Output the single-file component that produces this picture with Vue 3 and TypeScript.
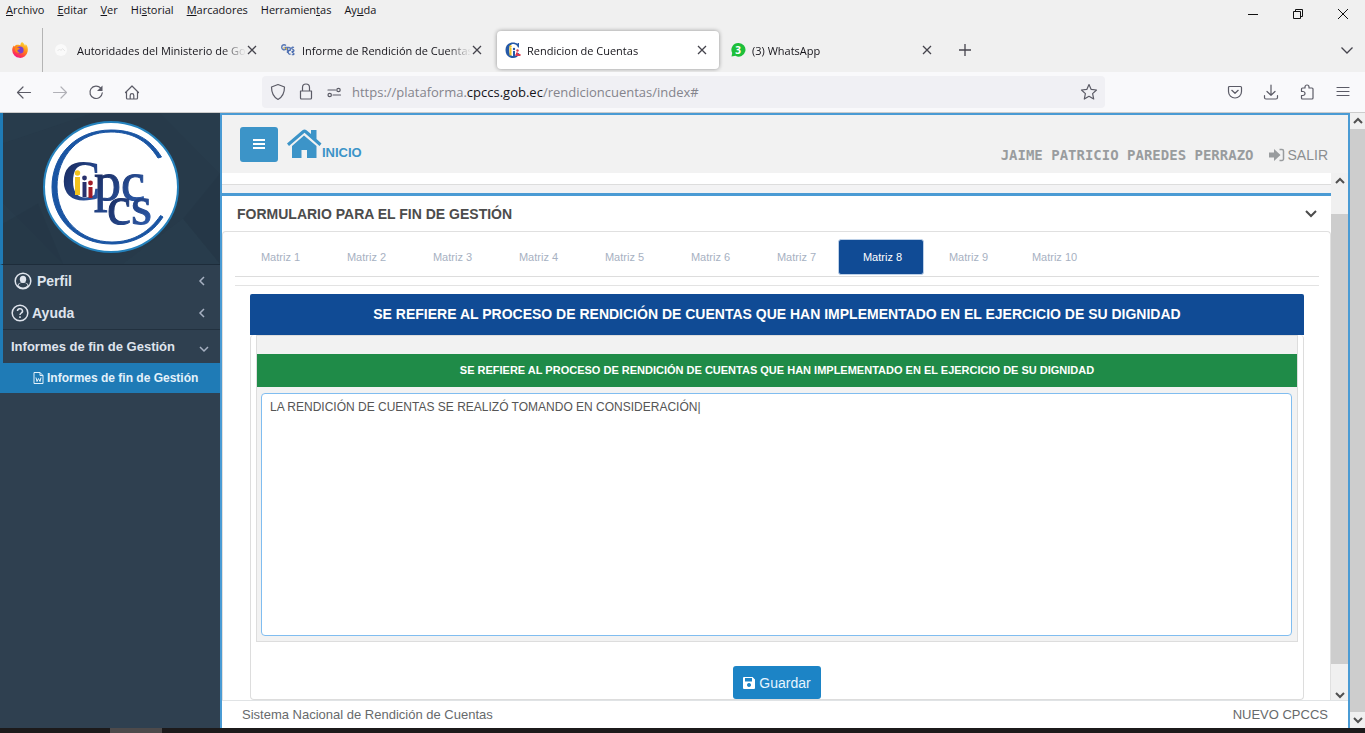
<script setup lang="ts">
import { ref } from 'vue'

interface MenuEntry { before: string; key: string; after: string }

const menus: MenuEntry[] = [
  { before: '', key: 'A', after: 'rchivo' },
  { before: '', key: 'E', after: 'ditar' },
  { before: '', key: 'V', after: 'er' },
  { before: 'Hi', key: 's', after: 'torial' },
  { before: '', key: 'M', after: 'arcadores' },
  { before: 'Herramien', key: 't', after: 'as' },
  { before: 'Ay', key: 'u', after: 'da' },
]

const browserTabs = [
  { id: 'gob', title: 'Autoridades del Ministerio de Gobierno' },
  { id: 'informe', title: 'Informe de Rendición de Cuentas' },
  { id: 'cpccs', title: 'Rendicion de Cuentas' },
  { id: 'wa', title: '(3) WhatsApp' },
]

const matrices = Array.from({ length: 10 }, (_, i) => i + 1)
const current = ref(8)
const answer = ref('LA RENDICIÓN DE CUENTAS SE REALIZÓ TOMANDO EN CONSIDERACIÓN|')
</script>

<template>
  <div class="window">
    <div class="menubar">
      <nav class="menus" aria-label="Menú">
        <button v-for="m in menus" :key="m.key" type="button">{{ m.before }}<u>{{ m.key }}</u>{{ m.after }}</button>
      </nav>
      <div class="controls">
        <button type="button" aria-label="Minimizar"><svg width="12" height="12"><path d="M1 6.5h10" /></svg></button>
        <button type="button" aria-label="Restaurar"><svg width="12" height="12"><path d="M1.500 3.500h7v7h-7zM3.500 3.500v-2h7v7h-2" /></svg></button>
        <button type="button" aria-label="Cerrar"><svg width="12" height="12"><path d="M1 1l10 10M11 1L1 11" /></svg></button>
      </div>
    </div>

    <div class="tabstrip">
      <div class="pinned">
        <svg width="18" height="18" viewBox="0 0 18 18" aria-hidden="true">
          <defs>
            <linearGradient id="fox" x1="0.8" y1="0" x2="0.3" y2="1">
              <stop offset="0" stop-color="#ffe13a" /><stop offset="0.45" stop-color="#ff8a16" />
              <stop offset="0.8" stop-color="#ff3750" /><stop offset="1" stop-color="#f0128f" />
            </linearGradient>
          </defs>
          <path d="M11 1c2 1.300 2.600 2.600 2.900 3.700.7-.2.800-1 .700-1.700 2 2 2.600 4.500 2.100 7.300A7.800 7.800 0 0 1 1.200 9.300c0-2.300.7-3.800 1.700-4.900.1.600.3 1 .6 1.200C4.200 4.400 5.300 3.700 7 3.800c1-.1 1.900.1 2.500.5C9.300 3 9.900 1.900 11 1z" fill="url(#fox)" />
          <circle cx="9" cy="9" r="3.600" fill="#7b3fd0" />
          <path d="M4 7c2-1 3.500-.2 5 .4-.6 1-2 .9-2.500 1.500-.5 1.500 1 2.600 2.600 2.200-1.800 2-5.600.2-5.100-4.100z" fill="#ff8a16" />
        </svg>
      </div>
      <div class="tabs">
        <div v-for="t in browserTabs" :key="t.id" class="tab" :class="{ selected: t.id === 'cpccs' }">
          <svg v-if="t.id === 'gob'" class="favicon" viewBox="0 0 16 16" aria-hidden="true">
            <circle cx="6" cy="8" r="6" fill="#fafafa" /><path d="M2.500 9l2-2 1.500 1.500 1.500-2L10 9" fill="none" stroke="#e6e6e6" />
          </svg>
          <svg v-else-if="t.id === 'informe'" class="favicon" viewBox="0 0 16 16" aria-hidden="true">
            <path d="M6 3.500C4 2 1.500 3 1.700 5.500S4.500 8.500 6 7V5.500H4.500M7.500 11V5.500h1.500a1.500 1.500 0 0 1 0 3H7.500" fill="none" stroke="#5877b5" stroke-width="1.400" />
            <path d="M10.500 8.500C9 8 8 9 8.200 10.500s1.300 2 2.300 1.200M14 5.500c-1.500-.7-2.500 0-2.300.9s2.500 1 2.300 2.200-1.500 1.400-2.500.8M14 9.500c-1.500-.7-2 0-1.800.8s2 .6 1.800 1.600-1.300 1-2.200.5" fill="none" stroke="#4a6db0" stroke-width="1.200" />
            <path d="M4 5v2M6.500 6v2" stroke="#d7b445" />
          </svg>
          <svg v-else-if="t.id === 'cpccs'" class="favicon" viewBox="0 0 16 16" aria-hidden="true">
            <path d="M14 1v4.500h-1C12 2.700 10 2 8.500 2 5.500 2 4.200 4.500 4.200 8s1.300 6 4.300 6c2 0 3.800-1 4.800-3l1 .5c-1 3-3.300 4.500-6.300 4.500-4.500 0-7.500-3.300-7.500-8S3.500.5 8 .5c2 0 3.500.6 4.500 1.300L13 1z" fill="#2559a8" />
            <path d="M5.500 6.500v7M4.500 7h2" stroke="#f0c52a" stroke-width="2" /><circle cx="5.500" cy="4.500" r="1.200" fill="#f0c52a" />
            <path d="M9 9v5" stroke="#2559a8" stroke-width="2" /><circle cx="9" cy="7" r="1.200" fill="#2559a8" />
            <path d="M12 10.500v3M10.500 13h5" stroke="#d93a52" stroke-width="2" /><circle cx="12.500" cy="8.500" r="1.200" fill="#d93a52" />
          </svg>
          <svg v-else class="favicon" viewBox="0 0 16 16" aria-hidden="true">
            <path d="M8.500 1a6.800 6.800 0 1 1-3 12.800L1.500 14.500l.7-3.500a6.800 6.800 0 0 1 6.300-10z" fill="#1dbf3a" />
            <text x="8" y="11.500" text-anchor="middle" class="badge-num">3</text>
          </svg>
          <span class="tab-title">{{ t.title }}</span>
          <button type="button" class="tab-close" aria-label="Cerrar pestaña"><svg width="12" height="12"><path d="M2 2l8 8M10 2l-8 8" /></svg></button>
        </div>
      </div>
      <button type="button" class="new-tab" aria-label="Nueva pestaña"><svg width="14" height="14"><path d="M7 1v12M1 7h12" /></svg></button>
      <button type="button" class="all-tabs" aria-label="Listar pestañas"><svg width="14" height="14"><path d="M1.500 4.500L7 10l5.500-5.500" /></svg></button>
    </div>

    <div class="toolbar">
      <button type="button" aria-label="Atrás"><svg width="16" height="16"><path d="M14.500 8.500H1.500M7 3L1.500 8.500 7 14" /></svg></button>
      <button type="button" class="dim" aria-label="Adelante"><svg width="16" height="16"><path d="M1.500 8.500h13M9 3l5.500 5.500L9 14" /></svg></button>
      <button type="button" aria-label="Recargar"><svg width="16" height="16"><path d="M12.800 4.200A6.200 6.200 0 1 0 14.300 8.800" /><path class="solid" d="M14.500 1.500v5.500H9z" /></svg></button>
      <button type="button" aria-label="Inicio"><svg width="16" height="16"><path d="M1.500 8.500L8 2l6.500 6.500M2.500 7.800V14a1 1 0 0 0 1 1h9a1 1 0 0 0 1-1V7.800M6.200 15v-3.500a1.800 1.800 0 0 1 3.600 0V15" /></svg></button>
      <div class="urlbar">
        <svg width="16" height="18"><path d="M8 1.500l6.500 2.500C14.500 10 12.500 14 8 16.500 3.500 14 1.500 10 1.500 4z" /></svg>
        <svg width="16" height="18"><path d="M2.500 8h11v7a1 1 0 0 1-1 1h-9a1 1 0 0 1-1-1zM4.500 8V4.500a3.500 3.500 0 0 1 7 0V8" /></svg>
        <svg width="16" height="18"><path d="M2 7h7.500M14.500 12H7" /><circle cx="12.500" cy="7" r="1.700" /><circle cx="3.700" cy="12" r="1.700" /></svg>
        <span class="address">https://plataforma.<b>cpccs.gob.ec</b>/rendicioncuentas/index#</span>
        <button type="button" aria-label="Añadir marcador"><svg width="18" height="18"><path d="M9 1.500l2.200 4.900 5.300.6-3.900 3.600 1.100 5.400L9 13.300 4.300 16l1.100-5.400L1.500 7l5.300-.6z" /></svg></button>
      </div>
      <button type="button" aria-label="Pocket"><svg width="16" height="16"><path d="M2.500 2.500h11a1 1 0 0 1 1 1v4a6.500 6.500 0 0 1-13 0v-4a1 1 0 0 1 1-1zM4.800 6.300L8 9.300l3.200-3" /></svg></button>
      <button type="button" aria-label="Descargas"><svg width="16" height="16"><path d="M8 1v10M4 7.500L8 11.300l4-3.800M1.500 11.500v2a1.500 1.500 0 0 0 1.500 1.500h10a1.500 1.500 0 0 0 1.500-1.500v-2" /></svg></button>
      <button type="button" aria-label="Extensiones"><svg width="16" height="16"><path d="M2.500 7.500V5a1 1 0 0 1 1-1H6V3a2 2 0 0 1 4 0v1h3a1 1 0 0 1 1 1v9a1 1 0 0 1-1 1H3.500a1 1 0 0 1-1-1v-2.500H4a2 2 0 0 0 0-4z" /></svg></button>
      <button type="button" aria-label="Menú de la aplicación"><svg width="16" height="16"><path d="M2 3.500h12M2 7.500h12M2 11.500h12" /></svg></button>
    </div>

    <div class="viewport">
      <aside class="sidebar">
        <div class="brand">
          <svg class="facets" viewBox="0 0 217 150" preserveAspectRatio="none" aria-hidden="true">
            <path d="M0 30L90 0H0zM217 0v60l-60-60zM0 150V90l60 60zM120 150l60-45 37 45z" fill="#2b4050" opacity=".4" />
            <path d="M217 60v90l-37-45zM60 150l-25-60L0 110v40z" fill="#223443" opacity=".4" />
          </svg>
          <svg class="logo" width="138" height="132" viewBox="0 0 138 132" role="img" aria-label="CPCCS">
            <defs>
              <linearGradient id="ink" x1="0" x2="1" y1="0" y2="1"><stop offset="0" stop-color="#16204f" /><stop offset="1" stop-color="#2f62b5" /></linearGradient>
            </defs>
            <ellipse cx="68" cy="66" rx="67" ry="65" fill="#fff" stroke="#2582bd" stroke-width="2" />
            <path d="M118.500 36C107 17 90 9 68 9 32 9 9 35 9 66s24 57 60 57c22 0 40-10 51-27l-2.500-1.500C107 110 91 121 69 121 37 121 14 97 14 66S36 11 68 11c20 0 36 8 47 26z" fill="#1a55a3" stroke="#1a55a3" stroke-width="1" />
            <text x="18" y="79" class="logo-c">C</text>
            <text x="51" y="79" class="logo-s">pc</text>
            <text x="64" y="103" class="logo-s">cs</text>
            <path d="M34.500 56v18" stroke="#f2c21d" stroke-width="5" /><circle cx="34.500" cy="52" r="2.700" fill="#f2c21d" />
            <path d="M41.500 61v15" stroke="#27306d" stroke-width="4" /><circle cx="41.500" cy="57" r="2.400" fill="#27306d" />
            <path d="M47.500 66v11" stroke="#a01c27" stroke-width="4" /><circle cx="47.500" cy="62" r="2.400" fill="#a01c27" />
          </svg>
        </div>
        <ul class="nav">
          <li><a href="#">
            <svg class="round" width="18" height="18" viewBox="0 0 18 18"><circle cx="9" cy="9" r="7.800" /><ellipse class="solid" cx="9" cy="7.300" rx="3.200" ry="3.600" /><path class="solid" d="M3 14c.5-2 2.500-3.200 4-3.500h4c1.500.3 3.500 1.500 4 3.500-3 3.500-9 3.500-12 0z" /><path class="cut" d="M4.500 13.500c0-1.500 1.500-2.300 2.500-2.500h4c1 .2 2.500 1 2.500 2.500-2.500 2.500-6.500 2.500-9 0z" /></svg>
            <span>Perfil</span><svg class="arrow" width="12" height="12"><path d="M8 2L4 6l4 4" /></svg></a></li>
          <li><a href="#" class="tight">
            <svg class="round" width="18" height="18" viewBox="0 0 18 18"><circle cx="9" cy="9" r="7.800" /><path d="M6.500 7a2.500 2.300 0 1 1 3.700 2c-.9.600-1.200.900-1.200 2M9 12.300v1.700" /></svg>
            <span>Ayuda</span><svg class="arrow" width="12" height="12"><path d="M8 2L4 6l4 4" /></svg></a></li>
          <li class="open"><a href="#" class="tight"><span>Informes de fin de Gestión</span><svg class="arrow" width="12" height="12"><path d="M2 6l4 4 4-4" /></svg></a></li>
        </ul>
        <a href="#" class="subitem">
          <svg width="11" height="12" viewBox="0 0 11 12"><path d="M1 .5h6l3 3v8H1zM7 .5v3h3M3 5.500l1 4 1.500-3 1.500 3 1-4" /></svg>
          <span>Informes de fin de Gestión</span>
        </a>
      </aside>

      <main class="page">
        <header class="topbar">
          <button type="button" class="toggle" aria-label="Alternar menú"><svg width="12" height="12"><path d="M0 2h12M0 6h12M0 10h12" /></svg></button>
          <a href="#" class="home">
            <svg width="36" height="30" viewBox="0 0 36 30"><path d="M17 6.500L29.500 17v12H20v-8h-5.500v8H5V17z" /><path d="M24 1h5.500v9l5 4.500-2 2.500L17.500 3.800 2 17 0 14.500 15.500 1.300q2-1.600 4 0L24 5z" /></svg>
            <span>INICIO</span>
          </a>
          <span class="user">JAIME PATRICIO PAREDES PERRAZO</span>
          <a href="#" class="logout">
            <svg width="16" height="14" viewBox="0 0 16 14"><path d="M0 4.500h5V1l6.500 6L5 13V9.500H0z" fill="#999c9e" /><path d="M10.500 1.500h2.500a1.500 1.500 0 0 1 1.500 1.500v8a1.500 1.500 0 0 1-1.500 1.500h-2.500" fill="none" stroke="#999c9e" stroke-width="1.500" /></svg>
            <span>SALIR</span>
          </a>
        </header>

        <div class="body">
          <div class="content">
            <div class="strip"></div>
            <div class="gap"></div>
            <section class="card">
              <div class="card-title">
                <h5>FORMULARIO PARA EL FIN DE GESTIÓN</h5>
                <button type="button" aria-label="Contraer"><svg width="12" height="10"><path d="M1 2l5 5 5-5" /></svg></button>
              </div>
              <div class="card-body">
                <div class="matrix-tabs" role="tablist">
                  <button v-for="n in matrices" :key="n" type="button" role="tab" :aria-selected="n === current" :class="{ on: n === current }" @click="current = n">Matriz {{ n }}</button>
                </div>
                <div class="panel">
                  <h4>SE REFIERE AL PROCESO DE RENDICIÓN DE CUENTAS QUE HAN IMPLEMENTADO EN EL EJERCICIO DE SU DIGNIDAD</h4>
                  <form class="form" @submit.prevent>
                    <div class="field">
                      <label for="answer">SE REFIERE AL PROCESO DE RENDICIÓN DE CUENTAS QUE HAN IMPLEMENTADO EN EL EJERCICIO DE SU DIGNIDAD</label>
                      <textarea id="answer" v-model="answer" spellcheck="false"></textarea>
                    </div>
                    <button type="submit" class="save">
                      <svg width="12" height="12" viewBox="0 0 12 12"><path fill-rule="evenodd" d="M1 0h8.500L12 2.500V11a1 1 0 0 1-1 1H1a1 1 0 0 1-1-1V1a1 1 0 0 1 1-1zM2 1v3.500h7V1zM6 6a2 2 0 1 0 .01 0z" /></svg>
                      Guardar
                    </button>
                  </form>
                </div>
              </div>
            </section>
          </div>
          <div class="scroll inner" aria-hidden="true">
            <svg class="end" width="10" height="8"><path d="M1 6l4-4 4 4" /></svg>
            <div class="lead"></div><div class="thumb"></div><div class="trail"></div>
            <svg class="end last" width="10" height="8"><path d="M1 2l4 4 4-4" /></svg>
          </div>
        </div>

        <footer class="footer"><span>Sistema Nacional de Rendición de Cuentas</span><span>NUEVO CPCCS</span></footer>
      </main>

      <div class="scroll outer" aria-hidden="true">
        <svg class="end" width="10" height="8"><path d="M1 6l4-4 4 4" /></svg>
        <div class="thumb"></div>
        <svg class="end" width="10" height="8"><path d="M1 2l4 4 4-4" /></svg>
      </div>
    </div>
    <div class="taskbar"><i></i></div>
  </div>
</template>

<style>
body { margin: 0; background: #fff; }
</style>

<style scoped>
* { box-sizing: border-box; }
button { font: inherit; color: inherit; background: none; border: 0; padding: 0; margin: 0; display: inline-flex; align-items: center; justify-content: center; }
a { color: inherit; text-decoration: none; }
svg { flex: none; display: block; }
h4, h5, ul { margin: 0; padding: 0; list-style: none; }

.window { display: flex; flex-direction: column; height: 100vh; overflow: hidden; font-family: "Liberation Sans", Arial, sans-serif; }

/* Browser chrome */
.menubar, .tabstrip, .toolbar { font-family: "Open Sans", "Noto Sans", sans-serif; font-size: 11px; color: #15141a; flex: none; display: flex; }
.menubar { height: 28px; background: #f0f0f0; justify-content: space-between; }
.menus { display: flex; gap: 13px; padding-left: 6px; height: 20px; }
.menus button { display: block; line-height: 20px; }
.controls { display: flex; }
.controls button { width: 45px; }
.controls path { fill: none; stroke: #111; }
.tabstrip { height: 44px; background: #f0f0f0; align-items: center; }
.pinned { width: 43px; height: 44px; border-right: 1px solid #b4b4b4; display: flex; align-items: center; justify-content: center; padding-right: 3px; }
.tabs { display: flex; gap: 3px; padding-left: 4px; }
.tab { width: 222px; height: 38px; border-radius: 4px; padding: 0 11px 0 8px; display: flex; align-items: center; }
.tab.selected { background: #fff; box-shadow: 0 0 4px rgba(0, 0, 0, .4); }
.favicon { width: 16px; height: 16px; margin-right: 6px; }
.badge-num { font-size: 10px; font-weight: 700; fill: #fff; }
.tab-title { flex: 1; min-width: 0; overflow: hidden; white-space: nowrap; -webkit-mask-image: linear-gradient(to left, transparent, #000 24px); mask-image: linear-gradient(to left, transparent, #000 24px); }
.tab-close path, .new-tab path, .all-tabs path { fill: none; stroke: #45444d; stroke-width: 1.3; }
.new-tab { margin-left: 14px; }
.all-tabs { margin: 0 11px 0 auto; }
.toolbar { height: 41px; background: #f9f9fb; border-bottom: 1px solid #ccc; padding: 0 4px 0 6px; align-items: center; }
.toolbar > button { width: 36px; height: 32px; }
.toolbar path, .toolbar circle { fill: none; stroke: #5b5b66; stroke-width: 1.2; stroke-linejoin: round; stroke-linecap: round; }
.toolbar path.solid { fill: #5b5b66; stroke: none; }
.toolbar .dim { opacity: .45; }
.urlbar { flex: 1; margin: 0 112px; height: 32px; background: #f0f0f4; border-radius: 4px; display: flex; align-items: center; gap: 12px; padding: 0 7px 0 8px; }
.address { flex: 1; font-size: 13px; color: #84848c; margin-left: -2px; white-space: nowrap; }
.address b { font-weight: 400; color: #15141a; }

/* Page */
.viewport { flex: 1; min-height: 0; display: flex; background: #fff; }
.sidebar { width: 220px; background: #2f4050; color: #dfe4ed; font-weight: 700; }
.brand { height: 152px; border-left: 3px solid #1f7bb6; border-bottom: 1px solid #1d2c3a; background: #273a4a; display: grid; justify-items: center; }
.facets { grid-area: 1 / 1; width: 100%; height: 100%; }
.logo { grid-area: 1 / 1; margin-top: 8px; z-index: 1; }
.logo-c { font: 700 57px "Liberation Serif", serif; fill: url(#ink); }
.logo-s { font: 54px "Liberation Serif", serif; fill: url(#ink); stroke: url(#ink); stroke-width: 1; }
.nav { border-left: 3px solid #1f7bb6; font-size: 14px; }
.nav a { height: 32px; display: flex; align-items: center; gap: 5px; padding: 0 12px 0 11px; }
.nav .tight { padding-left: 8px; gap: 3px; }
.nav .open { border-top: 1px solid #22313f; }
.nav .open a { height: 33px; font-size: 13px; padding-right: 10px; }
.round circle, .round path { fill: none; stroke: #dfe4ed; stroke-width: 1.5; }
.round .solid { fill: #dfe4ed; stroke: none; }
.round .cut { fill: #2f4050; stroke: none; }
.arrow { margin-left: auto; }
.arrow path { fill: none; stroke: #a7b1c2; stroke-width: 1.5; }
.subitem { height: 30px; background: #1f7bb6; display: flex; align-items: center; gap: 3px; padding-left: 33px; font-size: 12px; color: #e3f1fa; }
.subitem path { fill: none; stroke: #e3f1fa; }

.page { flex: 1; min-width: 0; display: flex; flex-direction: column; border: solid #4a9bd4; border-width: 2px 2px 0; }
.topbar { height: 58px; flex: none; background: #f2f2f2; display: flex; align-items: center; padding: 0 20px 0 18px; }
.toggle { width: 38px; height: 35px; background: #3c94c8; border-radius: 3px; }
.toggle path { stroke: #fff; stroke-width: 2; }
.home { display: flex; align-items: flex-end; margin-left: 9px; color: #3c94c8; font-size: 13px; font-weight: 700; line-height: 12px; }
.home path { fill: #3c94c8; }
.home span { margin-left: -1px; }
.user { margin: 22px 0 0 auto; font: 700 14px "DejaVu Sans Mono", monospace; color: #999c9e; }
.logout { margin: 22px 0 0 15px; display: flex; align-items: center; gap: 3px; font-size: 14px; color: #8b8e90; }

.body { flex: 1; min-height: 0; display: flex; }
.content { flex: 1; min-width: 0; overflow: hidden; }
.strip { height: 12px; border-bottom: 1px solid #ddd; }
.gap { height: 8px; background: #f3f3f4; }
.card { border-top: 3px solid #4a9bd4; }
.card-title { height: 35px; display: flex; align-items: center; justify-content: space-between; padding: 0 14px 0 15px; color: #4c4c4c; }
.card-title h5 { font-size: 14px; }
.card-title path { fill: none; stroke: #4c4c4c; stroke-width: 2; }
.card-body { border: 1px solid #e0e0e0; border-bottom: 0; border-radius: 4px 4px 0 0; padding: 7px 11px 20px 12px; }
.matrix-tabs { height: 38px; display: flex; border-bottom: 1px solid #ddd; padding-left: 1px; }
.matrix-tabs button { width: 86px; height: 36px; font-size: 11px; color: #a7b1c2; border-radius: 3px; padding-left: 3px; }
.matrix-tabs .on { background: #104b95; color: #fff; border: 1px solid #bcd0e8; }
.panel { border-top: 1px solid #e3e3e3; margin-top: 8px; padding: 8px 15px 0; }
.panel h4 { height: 41px; line-height: 41px; background: #104b95; color: #fff; text-align: center; font-size: 14px; border-radius: 2px 2px 0 0; white-space: nowrap; }
.form { border: 1px solid #ddd; border-top: 0; border-radius: 4px; padding: 0 5px; display: flex; flex-direction: column; align-items: center; }
.field { width: 100%; background: #f2f2f2; border: 1px solid #ddd; padding-top: 18px; display: flex; flex-direction: column; }
.field label { height: 33px; line-height: 33px; background: #1f8b48; color: #fff; font-size: 11px; font-weight: 700; text-align: center; white-space: nowrap; }
.field textarea { margin: 6px 5px 5px 4px; height: 243px; border: 1px solid #80bdf0; border-radius: 4px; background: #fff; padding: 6px 8px; resize: none; outline: 0; font: 12px/15px "Liberation Sans", Arial, sans-serif; color: #555; }
.save { margin-top: 24px; height: 33px; padding: 0 10px; gap: 4px; border-radius: 3px; background: #1c84c6; color: #e6f4ff; font-size: 14px; }
.save path { fill: #fff; }
.footer { height: 28px; flex: none; border-top: 1px solid #e0e3e5; display: flex; justify-content: space-between; align-items: center; padding: 0 20px; font-size: 13px; color: #676a6c; }

.scroll { display: flex; flex-direction: column; align-items: center; background: #f0f0f0; flex: none; }
.scroll path { fill: none; stroke: #505050; stroke-width: 2; }
.inner { width: 17px; }
.outer { width: 15px; }
.end { margin: 4px 0; }
.end.last { margin: 4px 0 1px; }
.thumb { width: 100%; background: #cdcdcd; flex: 1; }
.lead { height: 25px; flex: none; }
.trail { height: 23px; flex: none; }
.taskbar { height: 5px; flex: none; background: #1c1a1b; display: flex; padding-left: 110px; }
.taskbar i { width: 52px; background: #4d4a4b; }
</style>
